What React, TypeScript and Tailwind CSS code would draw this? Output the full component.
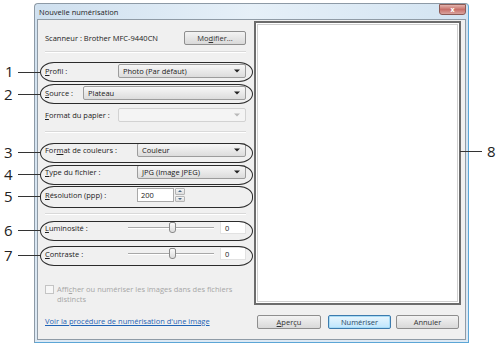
import React from "react";

const FONT = "font-['Open_Sans',sans-serif]";

function Arrow({ gray }: { gray?: boolean }) {
  return (
    <svg width="6" height="4" viewBox="0 0 6 4" className="shrink-0">
      <path d="M0 0.5 H6 L3 3.5 Z" fill={gray ? "#b8b8b8" : "#222"} />
    </svg>
  );
}

function Select({ text, w, disabled }: { text?: string; w: string; disabled?: boolean }) {
  return (
    <div
      className={
        "h-[14px] flex items-center justify-between pl-[4px] pr-[5px] rounded-[2px] border " +
        w +
        (disabled
          ? " border-[#d2d2d2] bg-[#f4f4f4]"
          : " border-[#9c9c9c] bg-gradient-to-b from-[#f7f7f7] to-[#dcdcdc]")
      }
    >
      <span className="text-[7.5px] leading-[10px] text-[#1a1a1a] whitespace-nowrap">{text}</span>
      <Arrow gray={disabled} />
    </div>
  );
}

function Btn({ children, w, primary }: { children: React.ReactNode; w: string; primary?: boolean }) {
  return (
    <div
      className={
        "h-[14px] flex items-center justify-center rounded-[2px] border text-[7.5px] leading-[10px] " +
        w +
        (primary
          ? " border-[#3d7bad] bg-gradient-to-b from-[#eaf6fd] to-[#bee6fd] text-[#2a4a66] shadow-[inset_0_0_0_1px_#a9dcf6]"
          : " border-[#8e8e8e] bg-gradient-to-b from-[#f3f3f3] to-[#d9d9d9] text-[#333]")
      }
    >
      {children}
    </div>
  );
}

function Sep({ mt }: { mt: string }) {
  return <div className={"h-[2px] border-t border-[#d9d9d9] border-b-white border-b " + mt} />;
}

function Slider() {
  return (
    <div className="relative w-[86px] h-[13px] flex items-center">
      <div className="w-full h-[2px] border-t border-[#a8a8a8] border-b border-b-white" />
      <div className="absolute left-[41px] top-[1px] w-[7px] h-[11px] rounded-t-[2px] rounded-b-[3px] border border-[#8a8a8a] bg-gradient-to-b from-[#fbfbfb] to-[#dcdcdc]" />
    </div>
  );
}

function Callout({ top, h }: { top: string; h: string }) {
  return (
    <div
      className={
        "absolute left-[40px] w-[213px] rounded-[14px/10px] border-[1.5px] border-[#2b2b2b] " + top + " " + h
      }
    />
  );
}

function Num({ n, top, left }: { n: string; top: string; left: string }) {
  return (
    <span className={"absolute text-[15px] leading-[16px] text-[#222] " + top + " " + left}>{n}</span>
  );
}

function Line({ top, left, w }: { top: string; left: string; w: string }) {
  return <div className={"absolute h-px bg-[#333] " + top + " " + left + " " + w} />;
}

export default function App() {
  return (
    <div className={"relative w-[500px] h-[346px] bg-white overflow-hidden " + FONT}>
      <div className="pt-[3px] pl-[34px]">
        <div className="w-[435px] h-[340px] flex flex-col rounded-t-[4px] border border-[#8d9aa6] border-r-[#5ca6d6] border-b-[#5ca6d6] bg-gradient-to-b from-[#d2e2f0] to-[#dde9f4] px-[2px] pb-[2px]">
          <div className="h-[15px] flex items-start justify-between bg-gradient-to-r from-[#cfe0ef] via-[#e6f0f8] to-[#d3e4f2]">
            <span className="ml-[2px] mt-[3px] text-[7.5px] leading-[10px] text-[#1e1e1e]">
              Nouvelle numérisation
            </span>
            <div className="mt-0 w-[27px] h-[11px] rounded-b-[3px] border border-[#8c5a55] bg-gradient-to-b from-[#e3b3ad] via-[#c7706a] to-[#d9a39e] flex items-center justify-center">
              <span className="text-[7px] leading-[8px] text-white font-bold">x</span>
            </div>
          </div>
          <div className="flex-1 flex border border-[#8f9ba6] bg-[#f0f0f0] text-[#222]">
            {/* left column */}
            <div className="w-[214px] pl-[7px] pr-[6px] flex flex-col text-[7.5px] leading-[10px]">
              <div className="mt-[11px] h-[14px] flex items-center justify-between">
                <span>Scanneur : Brother MFC-9440CN</span>
                <Btn w="w-[62px]">
                  <span>
                    Mo<span className="underline">d</span>ifier...
                  </span>
                </Btn>
              </div>
              <Sep mt="mt-[6px]" />
              <div className="mt-[11px] h-[14px] flex items-center justify-between">
                <span>
                  <span className="underline">P</span>rofil :
                </span>
                <Select text="Photo (Par défaut)" w="w-[128px]" />
              </div>
              <div className="mt-[8px] h-[14px] flex items-center justify-between">
                <span>
                  <span className="underline">S</span>ource :
                </span>
                <Select text="Plateau" w="w-[163px]" />
              </div>
              <div className="mt-[8px] h-[14px] flex items-center justify-between">
                <span>
                  <span className="underline">F</span>ormat du papier :
                </span>
                <Select w="w-[128px]" disabled />
              </div>
              <Sep mt="mt-[9px]" />
              <div className="mt-[10px] h-[14px] flex items-center justify-between">
                <span>
                  For<span className="underline">m</span>at de couleurs :
                </span>
                <Select text="Couleur" w="w-[109px]" />
              </div>
              <div className="mt-[8px] h-[14px] flex items-center justify-between">
                <span>
                  <span className="underline">T</span>ype du fichier :
                </span>
                <Select text="JPG (Image JPEG)" w="w-[109px]" />
              </div>
              <div className="mt-[9px] h-[14px] flex items-center">
                <span className="w-[92px]">
                  <span className="underline">R</span>ésolution (ppp) :
                </span>
                <div className="w-[37px] h-[14px] bg-white border border-[#a9a9a9] flex items-center pl-[3px]">
                  200
                </div>
                <div className="ml-[1px] w-[10px] h-[14px] flex flex-col gap-px">
                  <div className="flex-1 border border-[#b5b5b5] rounded-[1px] bg-gradient-to-b from-[#f5f5f5] to-[#dedede] flex items-center justify-center">
                    <svg width="4" height="2" viewBox="0 0 4 2">
                      <path d="M0 2 L2 0 L4 2 Z" fill="#4a6a8a" />
                    </svg>
                  </div>
                  <div className="flex-1 border border-[#b5b5b5] rounded-[1px] bg-gradient-to-b from-[#f5f5f5] to-[#dedede] flex items-center justify-center">
                    <svg width="4" height="2" viewBox="0 0 4 2">
                      <path d="M0 0 L2 2 L4 0 Z" fill="#4a6a8a" />
                    </svg>
                  </div>
                </div>
              </div>
              <Sep mt="mt-[11px]" />
              <div className="mt-[6px] h-[13px] flex items-center">
                <span className="w-[83px]">
                  <span className="underline">L</span>uminosité :
                </span>
                <Slider />
                <div className="ml-[6px] w-[26px] h-[13px] bg-white border border-[#e2e2e2] flex items-center pl-[4px]">
                  0
                </div>
              </div>
              <div className="mt-[13px] h-[13px] flex items-center">
                <span className="w-[83px]">
                  <span className="underline">C</span>ontraste :
                </span>
                <Slider />
                <div className="ml-[6px] w-[26px] h-[13px] bg-white border border-[#e2e2e2] flex items-center pl-[4px]">
                  0
                </div>
              </div>
              <div className="mt-[24px] flex items-start text-[#a6a6a6]">
                <div className="mt-[1px] w-[9px] h-[9px] border border-[#c4c4c4] bg-[#f7f7f7] shrink-0" />
                <div className="ml-[3px] leading-[10px]">
                  Affi<span className="underline">c</span>her ou numériser les images dans des fichiers
                  <br />
                  distincts
                </div>
              </div>
              <div className="mt-[12px] underline text-[#1f63b5]">
                Voir la procédure de numérisation d&apos;une image
              </div>
            </div>
            {/* right column */}
            <div className="flex-1 flex flex-col pt-[1px] pl-[2px] pr-[4px]">
              <div className="h-[284px] border-2 border-[#6c6c6c] bg-white p-[1px]">
                <div className="w-full h-full border border-[#cfcfcf]" />
              </div>
              <div className="mt-[10px] flex text-[7.5px] leading-[10px]">
                <div className="ml-[3px]">
                  <Btn w="w-[64px]">
                    <span>
                      <span className="underline">A</span>perçu
                    </span>
                  </Btn>
                </div>
                <div className="ml-[7px]">
                  <Btn w="w-[63px]" primary>
                    Numériser
                  </Btn>
                </div>
                <div className="ml-[5px]">
                  <Btn w="w-[63px]">Annuler</Btn>
                </div>
              </div>
            </div>
          </div>
        </div>
      </div>

      {/* callout ellipses */}
      <Callout top="top-[62px]" h="h-[20px]" />
      <Callout top="top-[84px]" h="h-[20px]" />
      <Callout top="top-[143px]" h="h-[20px]" />
      <Callout top="top-[165px]" h="h-[20px]" />
      <Callout top="top-[186px]" h="h-[22px]" />
      <Callout top="top-[221px]" h="h-[20px]" />
      <Callout top="top-[246px]" h="h-[20px]" />

      {/* numbers and leader lines */}
      <Num n="1" top="top-[63px]" left="left-[5px]" />
      <Line top="top-[72px]" left="left-[18px]" w="w-[22px]" />
      <Num n="2" top="top-[86px]" left="left-[4px]" />
      <Line top="top-[94px]" left="left-[18px]" w="w-[22px]" />
      <Num n="3" top="top-[144px]" left="left-[4px]" />
      <Line top="top-[152px]" left="left-[18px]" w="w-[22px]" />
      <Num n="4" top="top-[166px]" left="left-[4px]" />
      <Line top="top-[174px]" left="left-[18px]" w="w-[22px]" />
      <Num n="5" top="top-[188px]" left="left-[4px]" />
      <Line top="top-[196px]" left="left-[18px]" w="w-[22px]" />
      <Num n="6" top="top-[222px]" left="left-[4px]" />
      <Line top="top-[230px]" left="left-[18px]" w="w-[22px]" />
      <Num n="7" top="top-[247px]" left="left-[4px]" />
      <Line top="top-[255px]" left="left-[18px]" w="w-[22px]" />
      <Num n="8" top="top-[143px]" left="left-[487px]" />
      <Line top="top-[151px]" left="left-[460px]" w="w-[22px]" />
    </div>
  );
}
